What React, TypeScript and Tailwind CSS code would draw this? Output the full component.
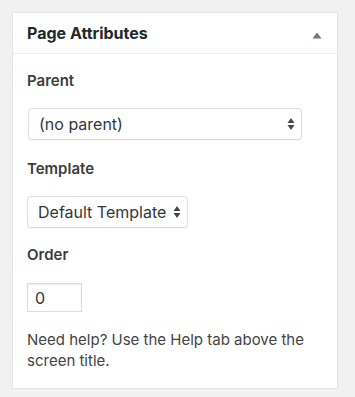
import React from "react";

const font = { fontFamily: "Inter, 'Noto Sans', sans-serif" };

function UpDown() {
  return (
    <svg width="8" height="14" viewBox="0 0 8 14" className="shrink-0">
      <path d="M4 1 L7.5 6 L0.5 6 Z" fill="#444" />
      <path d="M4 13 L7.5 8 L0.5 8 Z" fill="#444" />
    </svg>
  );
}

function FakeSelect({ value, className }: { value: string; className: string }) {
  return (
    <div
      className={`flex items-center justify-between rounded-[4px] border border-[#dcdcdc] bg-white pl-[10px] pr-[6px] text-[16px] text-[#32373c] shadow-[0_1px_1px_rgba(0,0,0,0.05)] ${className}`}
    >
      <span className="whitespace-nowrap">{value}</span>
      <UpDown />
    </div>
  );
}

export default function App() {
  return (
    <div className="min-h-[397px] w-[355px] bg-[#f1f1f1] pl-[12px] pt-[12px]" style={font}>
      <div className="h-[377px] w-[326px] border border-[#e2e4e7] bg-white">
        {/* header */}
        <div className="flex h-[41px] items-center justify-between border-b border-[#eeeeee] pl-[14px] pr-[15px]">
          <h2 className="text-[16px] font-bold text-[#23282d]">Page Attributes</h2>
          <svg width="10" height="7" viewBox="0 0 10 7" className="mt-[4px]">
            <path d="M5 0.5 L9.5 6.5 L0.5 6.5 Z" fill="#72777c" />
          </svg>
        </div>

        <div className="pl-[14px] pt-[17px]">
          <p className="text-[15px] font-semibold leading-[20px] text-[#3c3c3c]">Parent</p>
          <FakeSelect value="(no parent)" className="ml-[1px] mt-[17px] h-[32px] w-[274px]" />

          <p className="mt-[19px] text-[15px] font-semibold leading-[20px] text-[#3c3c3c]">Template</p>
          <FakeSelect value="Default Template" className="mt-[17px] h-[32px] w-[161px]" />

          <p className="mt-[17px] text-[15px] font-semibold leading-[20px] text-[#3c3c3c]">Order</p>
          <div className="mt-[18px] flex h-[29px] w-[55px] items-center border border-[#dcdcdc] pl-[7px] text-[16px] text-[#32373c] shadow-[inset_0_1px_2px_rgba(0,0,0,0.07)]">
            0
          </div>

          <p className="mt-[17px] pr-[16px] text-[15px] leading-[21px] text-[#444]">
            Need help? Use the Help tab above the screen title.
          </p>
        </div>
      </div>
    </div>
  );
}
